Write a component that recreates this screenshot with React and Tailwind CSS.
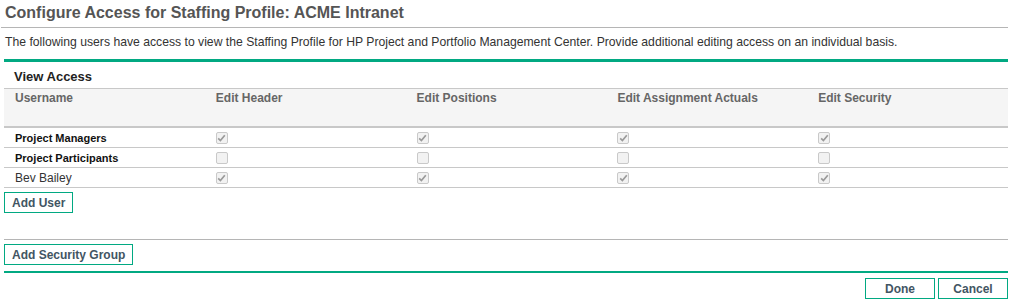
import React from "react";

const columns = ["Username", "Edit Header", "Edit Positions", "Edit Assignment Actuals", "Edit Security"];

const rows = [
  { name: "Project Managers", bold: true, checked: true },
  { name: "Project Participants", bold: true, checked: false },
  { name: "Bev Bailey", bold: false, checked: true },
];

// Disabled checkbox, greyed out like the original
function Check({ checked }) {
  return (
    <span className="flex h-[12px] w-[12px] items-center justify-center rounded-[2px] border border-[#c9c9c9] bg-[#f2f2f2]">
      {checked && (
        <svg width="9" height="8" viewBox="0 0 9 8">
          <path d="M1.2 4.4 L3.4 6.5 L7.8 1.2" fill="none" stroke="#9a9a9a" strokeWidth="1.7" />
        </svg>
      )}
    </span>
  );
}

function Button({ children, className = "" }) {
  return (
    <button
      className={`h-[21px] border border-[#01a982] bg-white px-[7px] text-[12px] font-bold leading-none text-[#425563] ${className}`}
    >
      {children}
    </button>
  );
}

export default function App() {
  return (
    <div className="h-[302px] w-[1010px] bg-white pl-[4px] pr-[2px] font-['Liberation_Sans',Arial,sans-serif]">
      {/* Page title */}
      <h1 className="pt-[3px] pl-px text-[16px] font-bold leading-[19px] text-[#555555]">
        Configure Access for Staffing Profile: ACME Intranet
      </h1>
      <div className="mt-[5px] -ml-[3px] h-px bg-[#b5b5b5]" />
      <p className="mt-[7px] pl-px text-[12.2px] leading-[14px] text-[#333333]">
        The following users have access to view the Staffing Profile for HP Project and Portfolio Management Center. Provide additional editing access on an individual basis.
      </p>
      <div className="mt-[10px] h-[3px] bg-[#01a982]" />

      {/* View access table */}
      <h2 className="pt-[7px] pl-[10px] text-[13px] font-bold leading-[15px] text-[#222222]">View Access</h2>
      <div className="mt-[4px] border-t border-[#c8c8c8]" />
      <div className="grid h-[39px] grid-cols-5 border-b-2 border-[#c8c8c8] bg-[#f5f5f5] pt-[2px]">
        {columns.map((c) => (
          <div key={c} className="pl-[11px] text-[12px] font-bold leading-[14px] text-[#666666]">
            {c}
          </div>
        ))}
      </div>
      {rows.map((r) => (
        <div key={r.name} className="grid h-[20px] grid-cols-5 items-center border-b border-[#c8c8c8]">
          <div
            className={`pl-[11px] leading-[14px] ${r.bold ? "text-[11px] font-bold text-[#111111]" : "text-[12px] text-[#333333]"}`}
          >
            {r.name}
          </div>
          {[0, 1, 2, 3].map((i) => (
            <div key={i} className="pl-[11px]">
              <Check checked={r.checked} />
            </div>
          ))}
        </div>
      ))}

      <div className="mt-[4px] flex">
        <Button>Add User</Button>
      </div>
      <div className="mt-[26px] h-px bg-[#b5b5b5]" />
      <div className="mt-[4px] flex">
        <Button>Add Security Group</Button>
      </div>
      <div className="mt-[6px] h-[2px] bg-[#01a982]" />

      {/* Footer actions */}
      <div className="mt-[5px] flex justify-end gap-[3px]">
        <Button className="w-[70px]">Done</Button>
        <Button className="w-[70px]">Cancel</Button>
      </div>
    </div>
  );
}
